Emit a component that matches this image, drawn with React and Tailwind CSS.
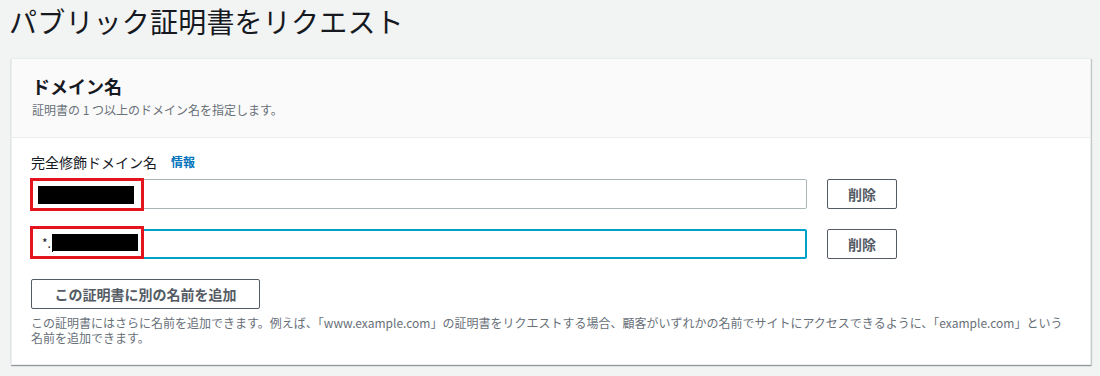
import { useState } from "react";

const FONT = {
  fontFamily: '"Noto Sans CJK JP", "Noto Sans", "Liberation Sans", sans-serif',
};

function DomainRow({ focused, children, onRemove }) {
  return (
    <div className="flex items-center gap-[20px]">
      <div className="relative w-[776px] h-[30px]">
        <div
          className={
            focused
              ? "w-full h-full bg-white border-2 border-[#00a1c9] rounded-[2px]"
              : "w-full h-full bg-white border border-[#aab7b8] rounded-[2px]"
          }
        />
        {/* redaction overlay */}
        {children}
      </div>
      <button
        onClick={onRemove}
        className="w-[70px] h-[30px] border border-[#545b64] rounded-[2px] bg-white text-[14px] font-bold text-[#545b64]"
      >
        削除
      </button>
    </div>
  );
}

export default function App() {
  const [rows, setRows] = useState([0, 1]);

  return (
    <div className="w-[1100px] h-[376px] bg-[#f2f3f3] overflow-hidden" style={FONT}>
      <h1 className="h-[58px] pl-[9px] pt-[1px] text-[28px] leading-[40px] font-normal text-[#16191f] tracking-[0.2px]">
        パブリック証明書をリクエスト
      </h1>

      <div className="ml-[11px] w-[1080px] bg-white border border-[#eaeded] shadow-[0_1px_1px_0_rgba(0,28,36,0.3),1px_1px_1px_0_rgba(0,28,36,0.15)]">
        <div className="h-[79px] bg-[#fafafa] border-b border-[#eaeded] px-[20px] pt-[15px]">
          <h2 className="text-[18px] leading-[24px] font-bold text-[#16191f]">ドメイン名</h2>
          <p className="mt-[4px] text-[12px] leading-[16px] text-[#687078]">
            証明書の 1 つ以上のドメイン名を指定します。
          </p>
        </div>

        <div className="px-[19px] pt-[15px] pb-[19px]">
          <div className="flex items-center gap-[14px] text-[14px] leading-[18px] text-[#16191f]">
            <span>完全修飾ドメイン名</span>
            <span className="text-[12px] font-bold text-[#0073bb]">情報</span>
          </div>

          <div className="mt-[8px] flex flex-col gap-[20px]">
            {rows.includes(0) && (
              <DomainRow onRemove={() => setRows(rows.filter((r) => r !== 0))}>
                <div className="absolute left-[-1px] top-[-1px] w-[114px] h-[33px] border-[3px] border-[#e3141d] bg-white flex items-center pl-[5px]">
                  <div className="w-[96px] h-[18px] bg-black" />
                </div>
              </DomainRow>
            )}
            {rows.includes(1) && (
              <DomainRow focused onRemove={() => setRows(rows.filter((r) => r !== 1))}>
                <div className="absolute left-[-1px] top-[-3px] w-[114px] h-[33px] border-[3px] border-[#e3141d] bg-white flex items-center pl-[9px]">
                  <span className="text-[12px] leading-none text-[#16191f]">*.</span>
                  <div className="ml-[1px] w-[1px] h-[18px] bg-black" />
                  <div className="w-[85px] h-[17px] bg-black" />
                </div>
              </DomainRow>
            )}
          </div>

          <button className="mt-[20px] w-[229px] h-[30px] border border-[#545b64] rounded-[2px] bg-white text-[14px] font-bold text-[#545b64]">
            この証明書に別の名前を追加
          </button>
          <p className="mt-[6px] text-[12px] leading-[15px] text-[#687078]">
            この証明書にはさらに名前を追加できます。例えば、「www.example.com」の証明書をリクエストする場合、顧客がいずれかの名前でサイトにアクセスできるように、「example.com」という
            <br />
            名前を追加できます。
          </p>
        </div>
      </div>
    </div>
  );
}
